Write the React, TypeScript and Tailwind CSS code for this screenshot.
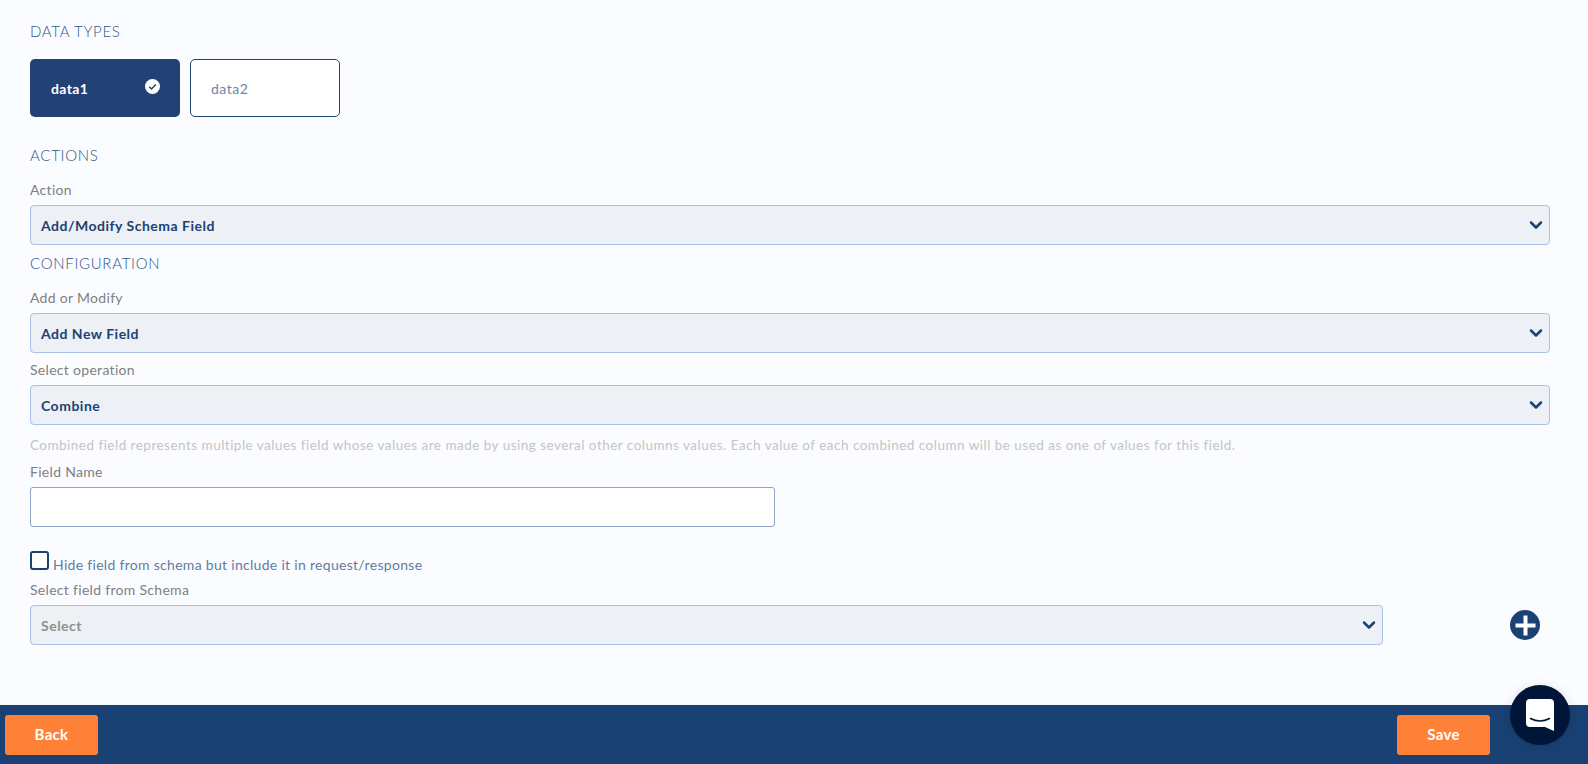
import { ChevronDown } from "lucide-react";

const font = "font-['Lato','Noto_Sans',sans-serif]";

function Heading(props: { text: string; className?: string }) {
    return <div className={`text-[15px] font-light leading-[20px] text-[#2f5888] tracking-[0.7px] ${props.className ?? ""}`}>{props.text}</div>;
}

function Label(props: { text: string; className?: string }) {
    return <div className={`text-[14px] leading-[18px] tracking-[0.3px] text-[#808080] ${props.className ?? ""}`}>{props.text}</div>;
}

function SelectBox(props: { value: string; muted?: boolean; className?: string }) {
    return (
        <div className={`flex h-[40px] items-center justify-between rounded-[4px] border border-[#a9c1e8] bg-[#edf0f5] pl-[10px] pr-[3px] ${props.className ?? ""}`}>
            <span className={`text-[14px] font-bold tracking-[0.5px] ${props.muted ? "text-[#8f8f8f]" : "text-[#1b4273]"}`}>{props.value}</span>
            <ChevronDown size={20} strokeWidth={3} className="text-[#1b4273]" />
        </div>
    );
}

export default function App() {
    return (
        <div className={`${font} relative flex h-[764px] flex-col bg-[#fbfcff]`}>
            <div className="flex-1 pl-[30px] pr-[38px] pt-[21px]">
                <Heading text="DATA TYPES" />
                <div className="mt-[18px] flex gap-[10px]">
                    <div className="relative flex h-[58px] w-[150px] items-center rounded-[5px] bg-[#244175] pl-[21px] text-[14px] font-bold tracking-[0.4px] text-white">
                        data1
                        <svg className="absolute right-[20px] top-[20px]" width="15" height="15" viewBox="0 0 15 15">
                            <circle cx="7.5" cy="7.5" r="7.5" fill="#ffffff" />
                            <path d="M4.2 7.8 L6.5 10 L10.8 5.4" fill="none" stroke="#244175" strokeWidth="1.5" />
                        </svg>
                    </div>
                    <div className="flex h-[58px] w-[150px] items-center rounded-[5px] border border-[#244175] bg-white pl-[20px] text-[14px] text-[#6c86a8] tracking-[0.5px]">
                        data2
                    </div>
                </div>
                <Heading text="ACTIONS" className="mt-[28px]" />
                <Label text="Action" className="mt-[16px]" />
                <SelectBox value="Add/Modify Schema Field" className="mt-[6px]" />
                <Heading text="CONFIGURATION" className="mt-[8px]" />
                <Label text="Add or Modify" className="mt-[16px]" />
                <SelectBox value="Add New Field" className="mt-[6px]" />
                <Label text="Select operation" className="mt-[8px]" />
                <SelectBox value="Combine" className="mt-[6px]" />
                <div className="mt-[12px] text-[13.5px] leading-[17px] text-[#c4c4c4] tracking-[0.48px]">
                    Combined field represents multiple values field whose values are made by using several other columns values. Each value of each combined column will be used as one of values for this field.
                </div>
                <Label text="Field Name" className="mt-[9px]" />
                <div className="mt-[6px] h-[40px] w-[745px] rounded-[3px] border border-[#8aa5c6] bg-white" />
                <div className="mt-[24px] flex items-start">
                    <div className="h-[19px] w-[19px] rounded-[3px] border-2 border-[#1b4273] bg-white" />
                    <span className="ml-[4px] mt-[5px] text-[14px] leading-[18px] text-[#5d7ca3] tracking-[0.3px]">Hide field from schema but include it in request/response</span>
                </div>
                <Label text="Select field from Schema" className="mt-[7px]" />
                <div className="mt-[6px] flex items-center">
                    <SelectBox value="Select" muted className="w-[1353px]" />
                    <div className="ml-[127px] flex h-[30px] w-[30px] items-center justify-center rounded-full bg-[#1b4273]">
                        <svg width="21" height="21" viewBox="0 0 21 21">
                            <path d="M10.5 0.5 V20.5 M0.5 10.5 H20.5" stroke="#ffffff" strokeWidth="4" />
                        </svg>
                    </div>
                </div>
            </div>
            <div className="flex h-[59px] items-center justify-between bg-[#1a4173] pl-[5px] pr-[98px]">
                <div className="flex h-[40px] w-[93px] items-center justify-center rounded-[3px] bg-[#ff8137] text-[15px] font-bold tracking-[0.3px] text-white">Back</div>
                <div className="flex h-[40px] w-[93px] items-center justify-center rounded-[3px] bg-[#ff8137] text-[15px] font-bold tracking-[0.3px] text-white">Save</div>
            </div>
            <div className="absolute left-[1510px] top-[685px] flex h-[60px] w-[60px] items-center justify-center rounded-full bg-[#001537] shadow-[0_1px_12px_rgba(0,0,0,0.12)]">
                <svg width="28" height="32" viewBox="0 0 28 32">
                    <path d="M4 0 H24 Q28 0 28 4 V32 L19 28 H4 Q0 28 0 24 V4 Q0 0 4 0 Z" fill="#ffffff" />
                    <path d="M4.5 19.5 Q14 24.5 23.5 19.5" fill="none" stroke="#001537" strokeWidth="1.6" strokeLinecap="round" />
                </svg>
            </div>
        </div>
    );
}
